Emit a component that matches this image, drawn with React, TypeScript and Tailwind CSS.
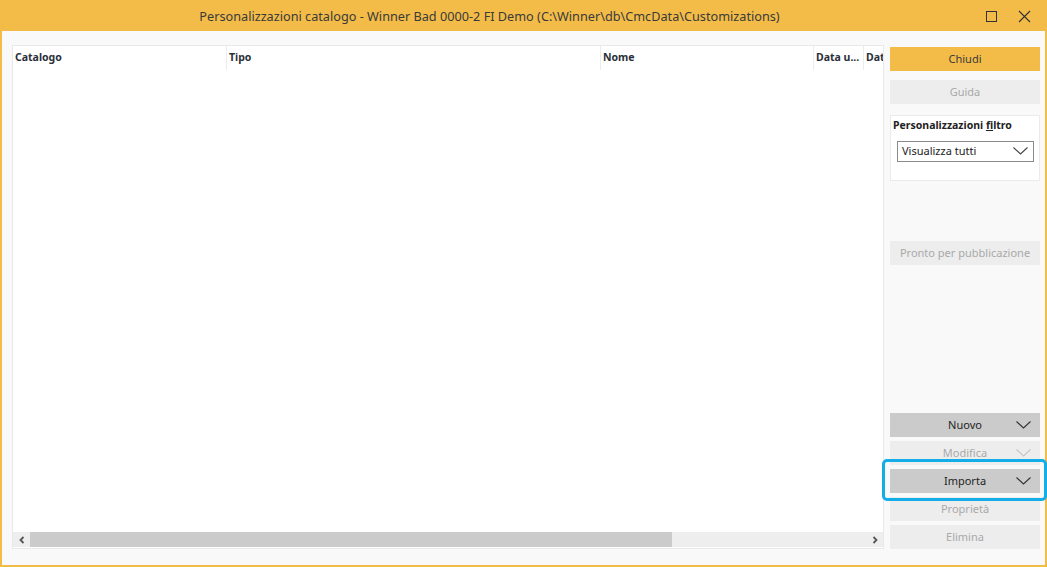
const columns = [
  { label: 'Catalogo', width: 'w-[214px]' },
  { label: 'Tipo', width: 'w-[374px]' },
  { label: 'Nome', width: 'w-[213px]' },
  { label: 'Data u...', width: 'w-[50px]' },
  { label: 'Dat', width: 'w-[60px]' },
];

function Chevron({ color }: { color: string }) {
  return (
    <svg width="15" height="8" viewBox="0 0 15 8">
      <path d="M0.5 0.5 L7.5 7 L14.5 0.5" stroke={color} strokeWidth="1.1" fill="none" />
    </svg>
  );
}

function PanelButton({
  label,
  variant,
  chevron,
}: {
  label: string;
  variant: 'primary' | 'disabled' | 'menu';
  chevron?: boolean;
}) {
  const styles = {
    primary: 'bg-[#f3bc49] text-[#3a3a3a]',
    disabled: 'bg-[#ededed] text-[#a9a9a9]',
    menu: 'bg-[#cbcbcb] text-[#1f1f1f]',
  }[variant];

  return (
    <div className={`relative flex h-[24px] w-[150px] items-center justify-center text-[11px] ${styles}`}>
      <span>{label}</span>
      {chevron && (
        <div className="absolute right-[9px] top-[8px] flex">
          <Chevron color={variant === 'disabled' ? '#c6c6c6' : '#333'} />
        </div>
      )}
    </div>
  );
}

export default function App() {
  return (
    <div
      className="relative h-[567px] w-[1047px] bg-[#f3f3f3] text-[#333]"
      style={{ fontFamily: '"Noto Sans", "Open Sans", sans-serif' }}
    >
      <div className="flex h-[567px] w-[1047px] flex-col border-2 border-[#f3bc49] bg-[#f9f9f9]">
        {/* Title bar */}
        <div className="relative flex h-[29px] shrink-0 items-center justify-center bg-[#f3bc49] pr-[68px]">
          <span className="text-[12.7px] text-[#3a3a3a]">
            Personalizzazioni catalogo - Winner Bad 0000-2 FI Demo (C:\Winner\db\CmcData\Customizations)
          </span>
          <div className="absolute right-[8px] top-0 flex h-[29px] items-center gap-[21px]">
            <div className="h-[11px] w-[11px] border border-[#333]" />
            <svg width="13" height="13" viewBox="0 0 13 13" className="mr-[6px]">
              <path d="M1 1 L12 12 M12 1 L1 12" stroke="#333" strokeWidth="1.1" />
            </svg>
          </div>
        </div>

        {/* Body */}
        <div className="flex flex-1 pl-[10px] pt-[14px]">
          {/* Grid */}
          <div className="flex h-[504px] w-[872px] flex-col overflow-hidden border border-[#e9e9e9] bg-white">
            <div className="flex h-[24px] shrink-0">
              {columns.map((col, i) => (
                <div
                  key={col.label}
                  className={`${col.width} flex shrink-0 items-center whitespace-nowrap pl-[2px] text-[10.5px] font-bold text-[#2a2f3a] ${i < columns.length - 1 ? 'border-r border-[#ececec]' : ''}`}
                >
                  {col.label}
                </div>
              ))}
            </div>
            <div className="flex-1" />
            {/* Horizontal scrollbar */}
            <div className="mb-[1px] flex h-[15px] shrink-0 items-center bg-[#eeeeee]">
              <div className="flex w-[17px] items-center justify-center">
                <svg width="8" height="8" viewBox="0 0 8 8">
                  <path d="M5.5 1 L2.5 4 L5.5 7" stroke="#555" strokeWidth="1.8" fill="none" />
                </svg>
              </div>
              <div className="h-[15px] w-[642px] bg-[#cbcbcb]" />
              <div className="flex-1" />
              <div className="flex w-[17px] items-center justify-center">
                <svg width="8" height="8" viewBox="0 0 8 8">
                  <path d="M2.5 1 L5.5 4 L2.5 7" stroke="#555" strokeWidth="1.8" fill="none" />
                </svg>
              </div>
            </div>
          </div>

          {/* Right panel */}
          <div className="ml-[6px] flex w-[150px] flex-col pt-[2px]">
            <PanelButton label="Chiudi" variant="primary" />
            <div className="mt-[9px]">
              <PanelButton label="Guida" variant="disabled" />
            </div>

            <div className="mt-[11px] h-[66px] w-[150px] border border-[#ebebeb] bg-white px-[6px] pt-[2px]">
              <div className="-ml-[4px] text-[10.5px] font-bold text-[#222]">
                Personalizzazioni <span className="underline">f</span>iltro
              </div>
              <div className="mt-[7px] flex h-[21px] w-[137px] items-center justify-between border border-[#8a8a8a] bg-white pl-[4px] pr-[5px]">
                <span className="text-[11px] text-[#222]">Visualizza tutti</span>
                <Chevron color="#444" />
              </div>
            </div>

            <div className="mt-[60px]">
              <PanelButton label="Pronto per pubblicazione" variant="disabled" />
            </div>

            <div className="mt-[148px] flex flex-col gap-[4px]">
              <PanelButton label="Nuovo" variant="menu" chevron />
              <PanelButton label="Modifica" variant="disabled" chevron />
              <PanelButton label="Importa" variant="menu" chevron />
              <PanelButton label="Proprietà" variant="disabled" />
              <PanelButton label="Elimina" variant="disabled" />
            </div>
          </div>
        </div>
      </div>

      {/* Highlight around Importa */}
      <div className="pointer-events-none absolute left-[882px] top-[459px] h-[42px] w-[165px] rounded-[5px] border-[3px] border-[#13aee8]" />
    </div>
  );
}
